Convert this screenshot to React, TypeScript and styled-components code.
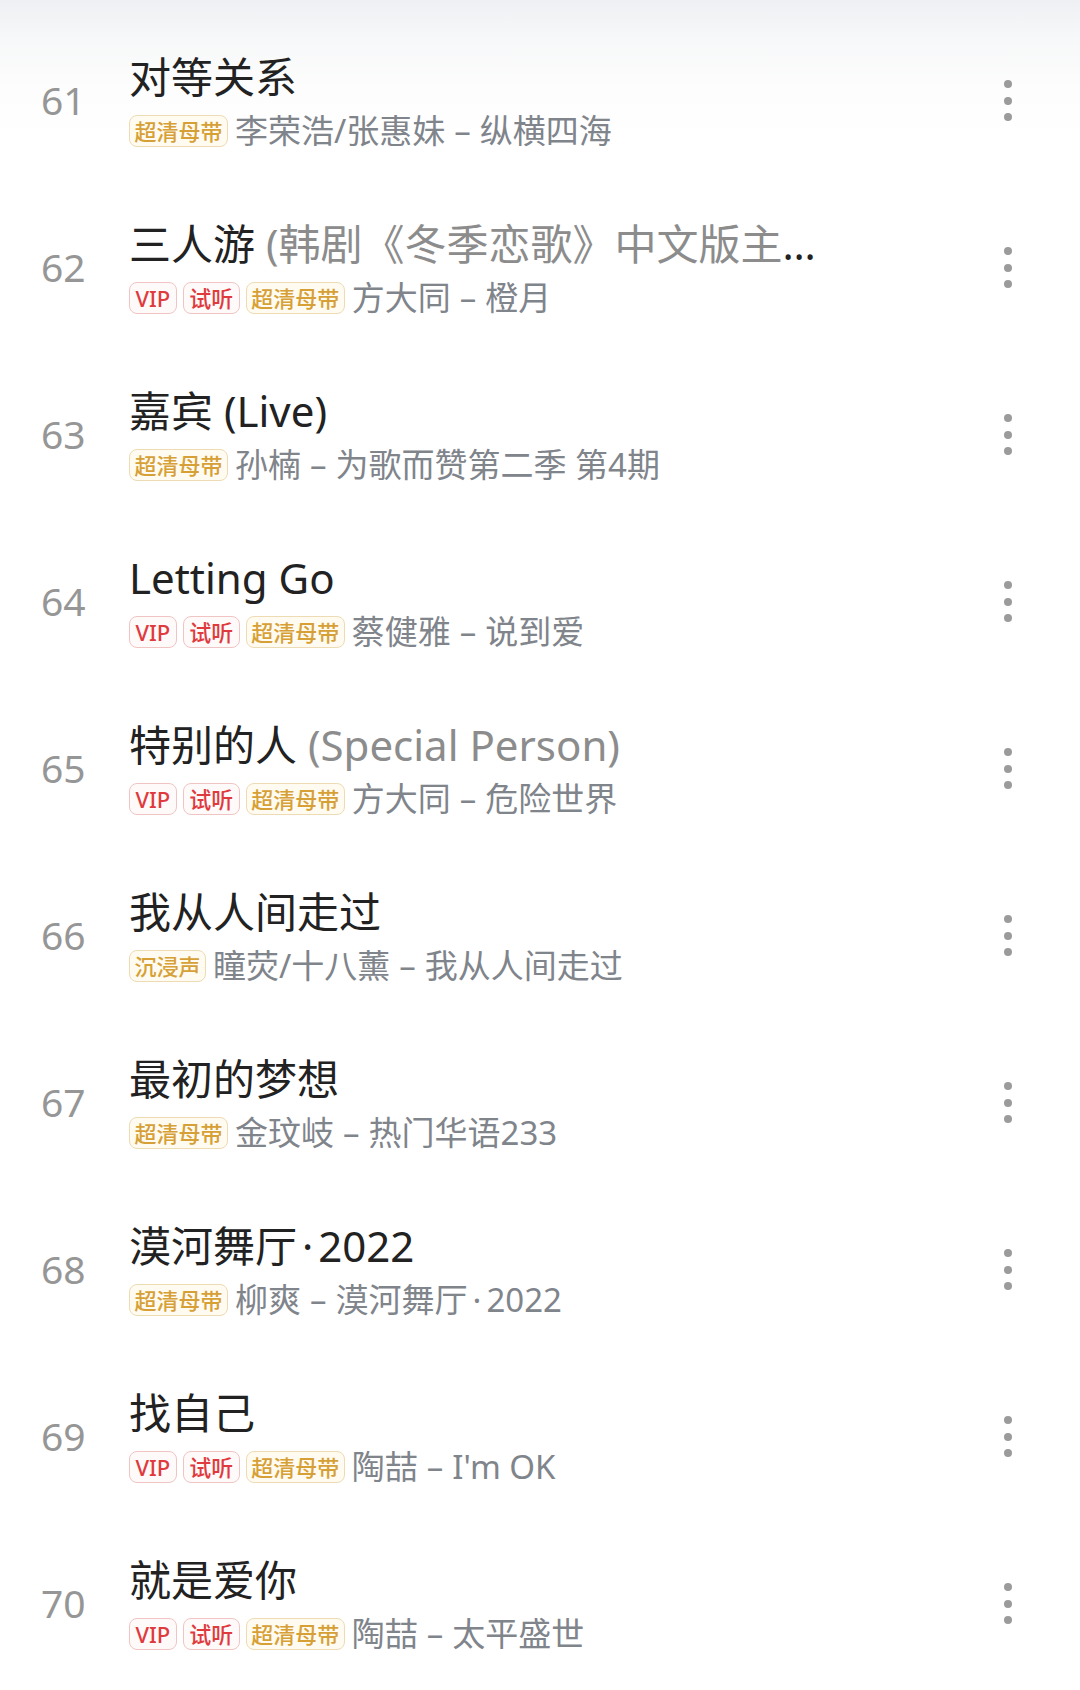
import React from "react";
import styled, { createGlobalStyle } from "styled-components";

const GlobalStyle = createGlobalStyle`
  html, body {
    margin: 0;
    padding: 0;
    background: #ffffff;
  }
  body {
    font-family: "Noto Sans", "Noto Sans CJK SC", sans-serif;
    -webkit-font-smoothing: antialiased;
  }
`;

const Page = styled.div`
  width: 1080px;
  min-height: 1690px;
  background: linear-gradient(180deg, #eef0f3 0px, #f7f8f9 40px, #fdfdfd 90px, #ffffff 140px);
  padding-top: 17px;
  box-sizing: border-box;
`;

const List = styled.ul`
  list-style: none;
  margin: 0;
  padding: 0;
  display: flex;
  flex-direction: column;
`;

const Row = styled.li`
  height: 167px;
  display: flex;
  align-items: center;
  padding-left: 41px;
  padding-right: 52px;
  box-sizing: border-box;
`;

const Index = styled.div`
  width: 88px;
  flex: none;
  font-family: "Noto Sans", sans-serif;
  font-size: 39px;
  color: #969696;
  line-height: 1.2;
`;

const Info = styled.div`
  flex: 1;
  min-width: 0;
  display: flex;
  flex-direction: column;
  gap: 2px;
`;

const Title = styled.div`
  font-size: 42px;
  line-height: 58px;
  color: #222222;
  white-space: nowrap;
  overflow: hidden;
  text-overflow: ellipsis;
  max-width: 704px;
`;

const Alias = styled.span`
  color: #8c8c8c;
`;

const Meta = styled.div`
  display: flex;
  align-items: center;
  height: 46px;
  gap: 6px;
`;

type BadgeKind = "vip" | "trial" | "gold";

const Badge = styled.span<{ $kind: BadgeKind }>`
  flex: none;
  display: inline-flex;
  align-items: center;
  justify-content: center;
  height: 32px;
  box-sizing: border-box;
  padding: 0 ${(p) => (p.$kind === "gold" ? 4.5 : 5.5)}px;
  border-radius: 8px;
  font-family: "Noto Sans", "Noto Sans CJK SC", sans-serif;
  font-size: 22px;
  font-weight: 500;
  line-height: 1;
  border: 1.5px solid ${(p) => (p.$kind === "gold" ? "#eddbb3" : "#f1c4c4")};
  color: ${(p) => (p.$kind === "gold" ? "#d6a036" : "#df3a3e")};
  background: ${(p) => (p.$kind === "gold" ? "#fffbf1" : "#fffafa")};
`;

const Sub = styled.span`
  margin-left: 1px;
  font-size: 33px;
  line-height: 46px;
  color: #80848b;
  white-space: nowrap;
  overflow: hidden;
  text-overflow: ellipsis;
`;

const Sep = styled.span`
  margin: 0 9px;
`;

const Interpunct = styled.span`
  margin: 0 5px;
`;

const More = styled.button`
  flex: none;
  width: 40px;
  height: 60px;
  border: none;
  background: transparent;
  padding: 0;
  display: flex;
  flex-direction: column;
  align-items: center;
  justify-content: center;
  gap: 8.5px;
`;

const Dot = styled.span`
  width: 8px;
  height: 8px;
  border-radius: 50%;
  background: #9b9b9b;
`;

type Tag = "vip" | "trial" | "gold" | "immersive";

type Song = {
  n: number;
  title: string;
  alias?: string;
  badges: Tag[];
  artist: string;
  album: string;
};

const songs: Song[] = [
  { n: 61, title: "对等关系", badges: ["gold"], artist: "李荣浩/张惠妹", album: "纵横四海" },
  { n: 62, title: "三人游", alias: " (韩剧《冬季恋歌》中文版主题曲)", badges: ["vip", "trial", "gold"], artist: "方大同", album: "橙月" },
  { n: 63, title: "嘉宾 (Live)", badges: ["gold"], artist: "孙楠", album: "为歌而赞第二季 第4期" },
  { n: 64, title: "Letting Go", badges: ["vip", "trial", "gold"], artist: "蔡健雅", album: "说到爱" },
  { n: 65, title: "特别的人", alias: " (Special Person)", badges: ["vip", "trial", "gold"], artist: "方大同", album: "危险世界" },
  { n: 66, title: "我从人间走过", badges: ["immersive"], artist: "瞳荧/十八薰", album: "我从人间走过" },
  { n: 67, title: "最初的梦想", badges: ["gold"], artist: "金玟岐", album: "热门华语233" },
  { n: 68, title: "漠河舞厅·2022", badges: ["gold"], artist: "柳爽", album: "漠河舞厅·2022" },
  { n: 69, title: "找自己", badges: ["vip", "trial", "gold"], artist: "陶喆", album: "I'm OK" },
  { n: 70, title: "就是爱你", badges: ["vip", "trial", "gold"], artist: "陶喆", album: "太平盛世" },
];

const badgeLabel: Record<Tag, string> = {
  vip: "VIP",
  trial: "试听",
  gold: "超清母带",
  immersive: "沉浸声",
};

const badgeKind = (t: Tag): BadgeKind => (t === "vip" || t === "trial" ? t : "gold");

const withDots = (text: string) => {
  const parts = text.split("·");
  return parts.map((p, i) => (
    <React.Fragment key={i}>
      {i > 0 && <Interpunct>·</Interpunct>}
      {p}
    </React.Fragment>
  ));
};

export default function App() {
  return (
    <>
      <GlobalStyle />
      <Page>
        <List>
          {songs.map((s) => (
            <Row key={s.n}>
              <Index>{s.n}</Index>
              <Info>
                <Title>
                  {withDots(s.title)}
                  {s.alias && <Alias>{s.alias}</Alias>}
                </Title>
                <Meta>
                  {s.badges.map((b) => (
                    <Badge key={b} $kind={badgeKind(b)}>
                      {badgeLabel[b]}
                    </Badge>
                  ))}
                  <Sub>
                    {s.artist}
                    <Sep>–</Sep>
                    {withDots(s.album)}
                  </Sub>
                </Meta>
              </Info>
              <More aria-label="更多">
                <Dot />
                <Dot />
                <Dot />
              </More>
            </Row>
          ))}
        </List>
      </Page>
    </>
  );
}
